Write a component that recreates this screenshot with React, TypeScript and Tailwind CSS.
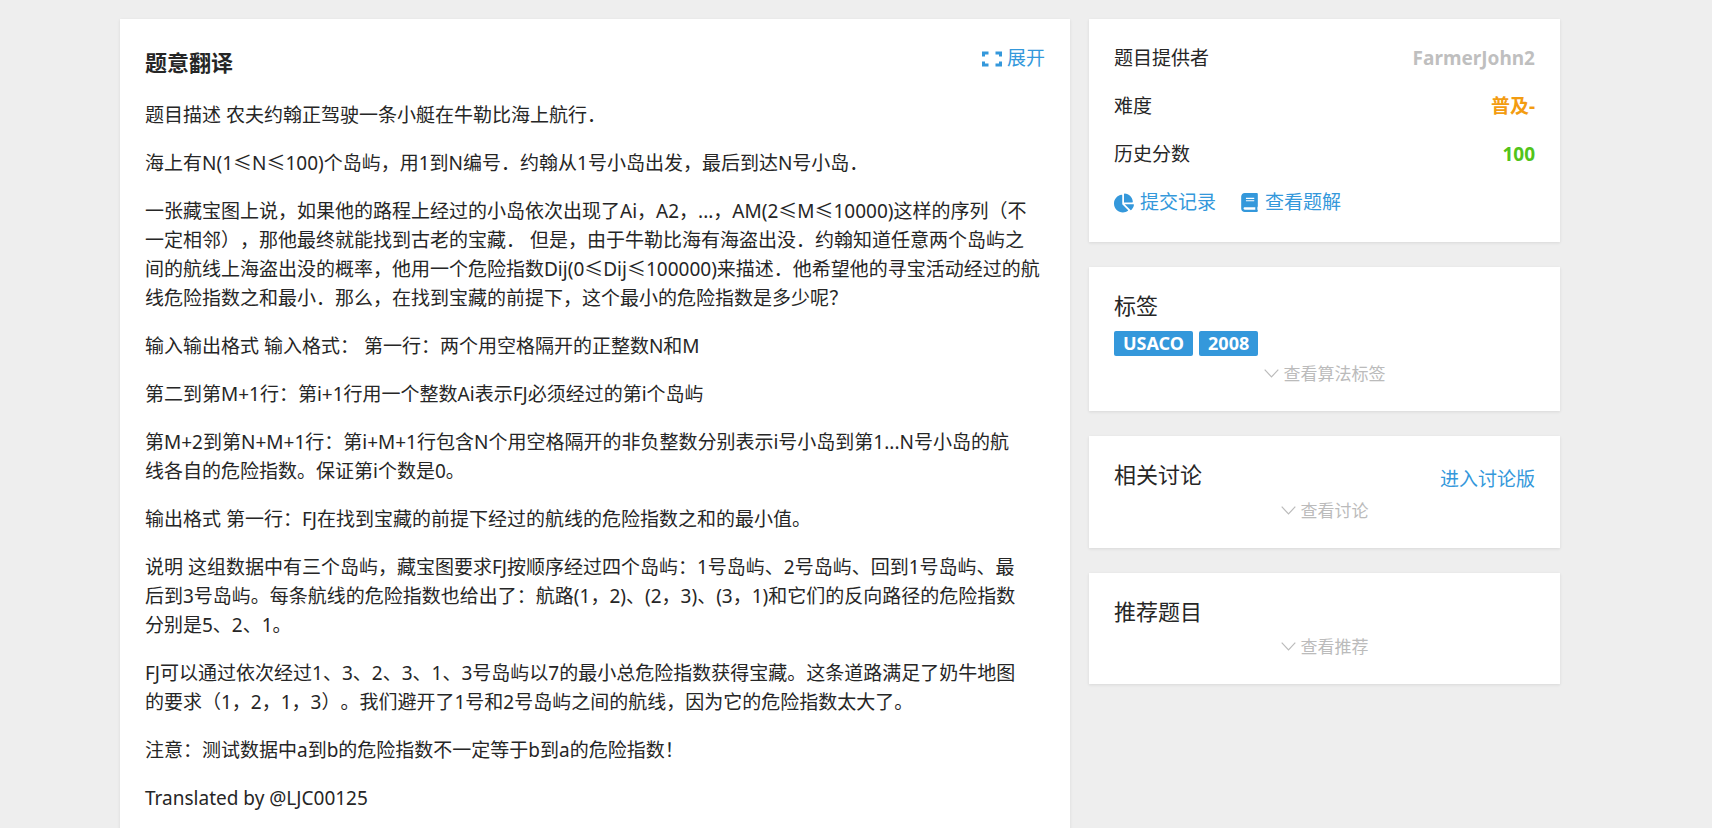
import React from 'react';
import { FaBook, FaChartPie } from 'react-icons/fa';

const paragraphs = [
  '题目描述 农夫约翰正驾驶一条小艇在牛勒比海上航行．',
  '海上有N(1≤N≤100)个岛屿，用1到N编号．约翰从1号小岛出发，最后到达N号小岛．',
  '一张藏宝图上说，如果他的路程上经过的小岛依次出现了Ai，A2，...，AM(2≤M≤10000)这样的序列（不\n一定相邻），那他最终就能找到古老的宝藏． 但是，由于牛勒比海有海盗出没．约翰知道任意两个岛屿之\n间的航线上海盗出没的概率，他用一个危险指数Dij(0≤Dij≤100000)来描述．他希望他的寻宝活动经过的航\n线危险指数之和最小．那么，在找到宝藏的前提下，这个最小的危险指数是多少呢？',
  '输入输出格式 输入格式： 第一行：两个用空格隔开的正整数N和M',
  '第二到第M+1行：第i+1行用一个整数Ai表示FJ必须经过的第i个岛屿',
  '第M+2到第N+M+1行：第i+M+1行包含N个用空格隔开的非负整数分别表示i号小岛到第1...N号小岛的航\n线各自的危险指数。保证第i个数是0。',
  '输出格式 第一行：FJ在找到宝藏的前提下经过的航线的危险指数之和的最小值。',
  '说明 这组数据中有三个岛屿，藏宝图要求FJ按顺序经过四个岛屿：1号岛屿、2号岛屿、回到1号岛屿、最\n后到3号岛屿。每条航线的危险指数也给出了：航路(1，2)、(2，3)、(3，1)和它们的反向路径的危险指数\n分别是5、2、1。',
  'FJ可以通过依次经过1、3、2、3、1、3号岛屿以7的最小总危险指数获得宝藏。这条道路满足了奶牛地图\n的要求（1，2，1，3）。我们避开了1号和2号岛屿之间的航线，因为它的危险指数太大了。',
  '注意：测试数据中a到b的危险指数不一定等于b到a的危险指数！',
  'Translated by @LJC00125',
];

const tags = ['USACO', '2008'];

const ExpandIcon = () => (
  <svg width="20" height="16" viewBox="0 0 20 16" fill="none" stroke="currentColor" strokeWidth="3" aria-hidden="true">
    <path d="M1.5 5.5V2H6.5M13.5 2H18.5V5.5M18.5 10.5V14H13.5M6.5 14H1.5V10.5" />
  </svg>
);

const Card: React.FC<{ children: React.ReactNode }> = ({ children }) => (
  <section className="bg-white p-[25px] shadow-[0_1px_3px_rgba(26,26,26,0.1)]">{children}</section>
);

const MoreButton: React.FC<{ label: string }> = ({ label }) => (
  <button
    type="button"
    className="mx-auto flex cursor-pointer items-center gap-[5px] text-[17px] leading-[25px] text-[#bbbbbb]"
  >
    <svg width="15" height="9" viewBox="0 0 15 9" fill="none" stroke="currentColor" strokeWidth="1.2" aria-hidden="true">
      <path d="M0.7 0.7L7.5 7.8L14.3 0.7" />
    </svg>
    {label}
  </button>
);

const App: React.FC = () => {
  return (
    <div className="min-h-screen bg-[#eeeeee] pt-[19px] pr-8 font-['Noto_Sans','Noto_Sans_CJK_SC',sans-serif] text-[19px] leading-[29px] text-[#262626] [text-spacing-trim:space-all]" lang="zh-CN">
      <div className="mx-auto grid max-w-[1440px] grid-cols-[950fr_471fr] items-start gap-[19px]">
        <Card>
          <div className="mb-[21px] flex items-start justify-between">
            <h2 className="text-[22px] leading-9 font-bold">题意翻译</h2>
            <button type="button" className="flex cursor-pointer items-center gap-[5px] text-[#3498db]">
              <ExpandIcon />
              展开
            </button>
          </div>
          <div className="space-y-[19px]">
            {paragraphs.map((text) => (
              <p key={text} className="whitespace-pre-line">{text}</p>
            ))}
          </div>
        </Card>

        <aside className="space-y-[25px]">
          <Card>
            <dl className="space-y-[19px]">
              <div className="flex justify-between">
                <dt>题目提供者</dt>
                <dd className="font-bold text-[#bfbfbf]">FarmerJohn2</dd>
              </div>
              <div className="flex justify-between">
                <dt>难度</dt>
                <dd className="font-bold text-[#f39c11]">普及-</dd>
              </div>
              <div className="flex justify-between">
                <dt>历史分数</dt>
                <dd className="font-bold text-[#52c41a]">100</dd>
              </div>
            </dl>
            <div className="mt-[19px] flex gap-6 text-[#3498db]">
              <a href="#records" className="flex items-center gap-[6px]">
                <FaChartPie className="size-5" />
                提交记录
              </a>
              <a href="#solutions" className="flex items-center gap-[6px]">
                <FaBook className="size-[19px]" />
                查看题解
              </a>
            </div>
          </Card>

          <Card>
            <h3 className="text-[22px] leading-[26px]">标签</h3>
            <div className="mt-[13px] mb-[5px] flex gap-[6px]">
              {tags.map((tag) => (
                <span key={tag} className="rounded-[2px] bg-[#3498db] px-[9px] text-[18px] leading-[25px] font-bold text-white">
                  {tag}
                </span>
              ))}
            </div>
            <MoreButton label="查看算法标签" />
          </Card>

          <Card>
            <div className="flex items-center justify-between">
              <h3 className="pb-[11px] text-[22px] leading-[26px]">相关讨论</h3>
              <a href="#discuss" className="text-[#3498db]">进入讨论版</a>
            </div>
            <MoreButton label="查看讨论" />
          </Card>

          <Card>
            <h3 className="pb-[10px] text-[22px] leading-[26px]">推荐题目</h3>
            <MoreButton label="查看推荐" />
          </Card>
        </aside>
      </div>
    </div>
  );
};

export default App;
